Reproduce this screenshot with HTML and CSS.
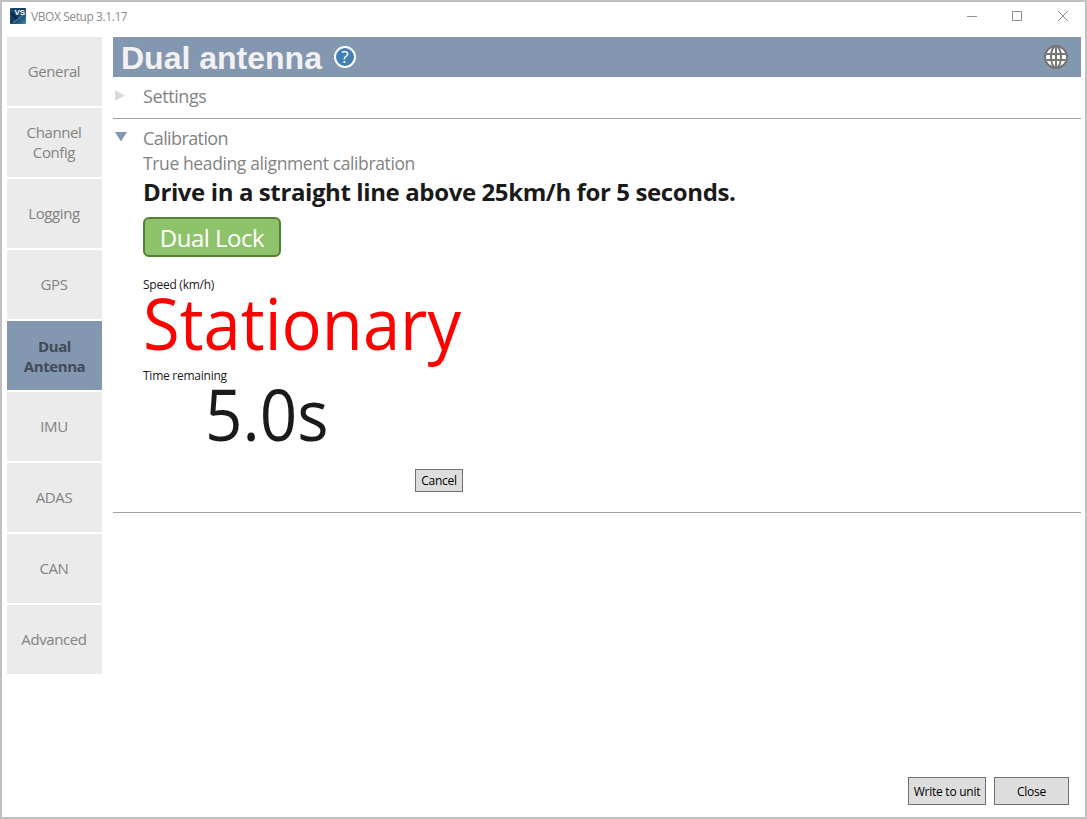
FILE: index.html
```html
<!DOCTYPE html>
<html lang="en">
<head>
    <meta charset="UTF-8">
    <title>VBOX Setup</title>
    <link rel="stylesheet" href="styles.css">
</head>
<body>
    <div class="window">
        <div class="titlebar">
            <svg class="logo" width="16" height="16" viewBox="0 0 16 16">
                <defs>
                    <linearGradient id="logoFill" x1="0" y1="0" x2="1" y2="1">
                        <stop offset="0" stop-color="#1a4767"/>
                        <stop offset="0.5" stop-color="#173d5e"/>
                        <stop offset="1" stop-color="#3a86ad"/>
                    </linearGradient>
                </defs>
                <rect width="16" height="16" rx="1" fill="url(#logoFill)"/>
                <path d="M1 5L8 12" stroke="#0c2745" stroke-width="2.5"/>
                <path d="M3 15L13 7" stroke="#3f7fa5" stroke-width="1.2"/>
                <text x="4.5" y="7" class="logo-text">VS</text>
            </svg>
            <span class="title">VBOX Setup 3.1.17</span>
            <svg class="controls" width="104" height="12" viewBox="0 0 104 12">
                <path d="M0 6.5H10M45.5 1.5H54.5V10.5H45.5Z" fill="none" stroke="#8e8e8e"/>
                <path d="M91 1L101 11M101 1L91 11" stroke="#8e8e8e"/>
            </svg>
        </div>
        <div class="body">
            <ul class="menu">
                <li><span>General</span></li>
                <li><span>Channel<br>Config</span></li>
                <li><span>Logging</span></li>
                <li><span>GPS</span></li>
                <li class="active"><span>Dual<br>Antenna</span></li>
                <li><span>IMU</span></li>
                <li><span>ADAS</span></li>
                <li><span>CAN</span></li>
                <li><span>Advanced</span></li>
            </ul>
            <div class="main">
                <div class="header">
                    <h1>Dual antenna</h1>
                    <svg width="22" height="22" viewBox="0 0 22 22">
                        <circle cx="11" cy="11" r="10" fill="#4080b4" stroke="#fff" stroke-width="2"/>
                        <text x="11" y="17" class="help-text">?</text>
                    </svg>
                    <svg class="globe" width="24" height="24" viewBox="0 0 24 24" fill="none" stroke="#757575" stroke-width="2">
                        <circle cx="12" cy="12" r="11" fill="#fff"/>
                        <ellipse cx="12" cy="12" rx="5" ry="11"/>
                        <path d="M12 1V23M2.5 9H21.5M2.5 15H21.5"/>
                    </svg>
                </div>
                <div class="section settings">
                    <svg class="arrow" width="12" height="12"><path d="M0 0L10 5.5L0 11Z" fill="#d9d9d9"/></svg>
                    <h2>Settings</h2>
                </div>
                <div class="section calibration">
                    <svg class="arrow" width="12" height="12"><path d="M0 0H12L6 9.5Z" fill="#8497b0"/></svg>
                    <div class="content">
                        <h2>Calibration</h2>
                        <p class="sub">True heading alignment calibration</p>
                        <p class="message">Drive in a straight line above 25km/h for 5 seconds.</p>
                        <div class="lock"><span>Dual Lock</span></div>
                        <p class="label">Speed (km/h)</p>
                        <p class="speed">Stationary</p>
                        <p class="label">Time remaining</p>
                        <p class="time">5.0s</p>
                        <button class="cancel">Cancel</button>
                    </div>
                </div>
                <div class="footer">
                    <button class="write">Write to unit</button>
                    <button class="close">Close</button>
                </div>
            </div>
        </div>
    </div>
</body>
</html>
```
FILE: styles.css
```css
*{
    box-sizing: border-box;
}
body{
    margin: 0;
    font-family: "Open Sans", "Noto Sans", sans-serif;
    font-size: 12px;
    color: #1a1a1a;
}
h1, h2, p, ul{
    margin: 0;
    padding: 0;
    font-weight: normal;
    white-space: nowrap;
}
svg{
    display: block;
    flex: none;
}
.window{
    display: flex;
    flex-direction: column;
    width: 1087px;
    height: 819px;
    border: 2px solid #c0c0c0;
    background-color: #fff;
}
.titlebar{
    display: flex;
    align-items: center;
    height: 35px;
    padding: 0 14px 7px 8px;
}
.logo-text{
    font: bold 8px "Liberation Sans", sans-serif;
    fill: #fff;
}
.title{
    margin-left: 5px;
    color: #8e8e8e;
    letter-spacing: -0.42px;
}
.controls{
    margin-left: auto;
}
.body{
    display: flex;
    flex: 1;
    padding: 0 4px 12px 5px;
}
.menu{
    display: flex;
    flex-direction: column;
    gap: 2px;
    width: 95px;
    margin-right: 11px;
    list-style-type: none;
}
.menu li{
    display: flex;
    align-items: center;
    justify-content: center;
    height: 69px;
    padding: 0 1px 2px 0;
    background-color: #ebebeb;
    color: #838383;
    font-size: 15px;
    line-height: 20px;
    letter-spacing: -0.4px;
    text-align: center;
}
.menu .active{
    padding: 0;
    background-color: #8497b0;
    color: #414b59;
    font-weight: bold;
}
.main{
    display: flex;
    flex: 1;
    flex-direction: column;
}
.header{
    display: flex;
    align-items: center;
    height: 40px;
    padding: 0 13px 0 8px;
    background-color: #8497b0;
}
.header h1{
    margin-right: 12px;
    padding-top: 2px;
    color: #f2f2f2;
    font: bold 32px/38px "Liberation Sans", sans-serif;
}
.help-text{
    font: 17px "Open Sans", sans-serif;
    fill: #fff;
    text-anchor: middle;
}
.globe{
    margin-left: auto;
}
.section{
    display: flex;
    border-bottom: 1px solid #a0a0a0;
    color: #838383;
}
.section h2{
    font-size: 18px;
    line-height: 24px;
    letter-spacing: -0.4px;
}
.arrow{
    margin: 6px 16px 0 2px;
}
.settings{
    height: 42px;
    padding-top: 7px;
}
.calibration{
    height: 394px;
    padding-top: 7px;
}
.content{
    display: flex;
    flex-direction: column;
    align-items: flex-start;
}
.content h2{
    letter-spacing: -0.6px;
}
.sub{
    font-size: 17.5px;
    line-height: 26px;
    letter-spacing: -0.38px;
}
.message{
    color: #1a1a1a;
    font-size: 24px;
    font-weight: bold;
    line-height: 32px;
    letter-spacing: -0.39px;
}
.lock{
    width: 138px;
    height: 40px;
    margin: 9px 0 20px;
    border: 2px solid #548235;
    border-radius: 6px;
    background-color: #8fc36b;
    color: #fff;
    font-size: 24px;
    line-height: 38px;
    letter-spacing: -0.5px;
    text-align: center;
}
.label{
    color: #1a1a1a;
    line-height: 16px;
    letter-spacing: -0.25px;
}
.speed, .time{
    height: 75px;
    font-size: 72px;
    line-height: 58px;
    transform: scaleX(0.93);
    transform-origin: left;
}
.speed{
    color: #f00;
}
.time{
    margin-left: 62px;
    color: #1a1a1a;
    transform: scaleX(0.91);
}
button{
    padding: 0;
    border: 1px solid #707070;
    background-color: #ddd;
    color: #000;
    font-family: inherit;
    font-size: 12px;
    letter-spacing: -0.25px;
}
.cancel{
    width: 48px;
    height: 23px;
    margin: 10px 0 0 272px;
}
.footer{
    display: flex;
    gap: 8px;
    justify-content: flex-end;
    margin-top: auto;
    padding-right: 12px;
}
.write{
    width: 78px;
    height: 28px;
}
.close{
    width: 75px;
    height: 28px;
}
```
